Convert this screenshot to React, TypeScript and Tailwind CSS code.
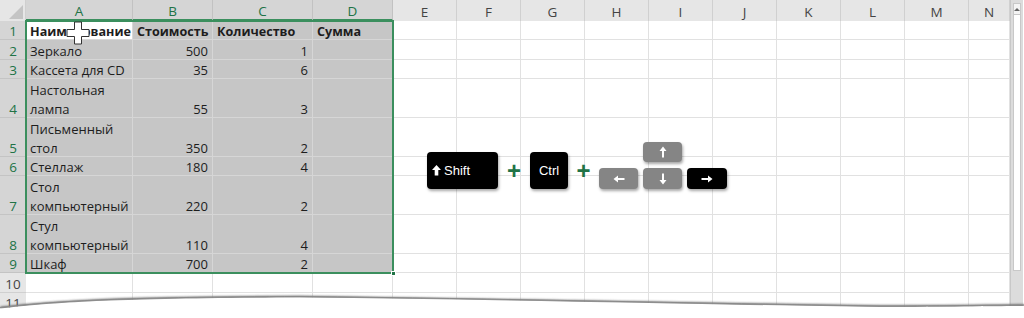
import React from "react"

const COLS = [
    { l: "A", w: 107, sel: true },
    { l: "B", w: 80, sel: true },
    { l: "C", w: 100, sel: true },
    { l: "D", w: 80, sel: true },
    { l: "E", w: 64 },
    { l: "F", w: 64 },
    { l: "G", w: 64 },
    { l: "H", w: 64 },
    { l: "I", w: 64 },
    { l: "J", w: 64 },
    { l: "K", w: 64 },
    { l: "L", w: 64 },
    { l: "M", w: 64 },
    { l: "N", w: 41 },
]

type Row = { n: number; tall?: boolean; a: string[]; b?: string; c?: string; d?: string; head?: boolean }

const ROWS: Row[] = [
    { n: 1, a: ["Наименование"], b: "Стоимость", c: "Количество", d: "Сумма", head: true },
    { n: 2, a: ["Зеркало"], b: "500", c: "1" },
    { n: 3, a: ["Кассета для CD"], b: "35", c: "6" },
    { n: 4, tall: true, a: ["Настольная", "лампа"], b: "55", c: "3" },
    { n: 5, tall: true, a: ["Письменный", "стол"], b: "350", c: "2" },
    { n: 6, a: ["Стеллаж"], b: "180", c: "4" },
    { n: 7, tall: true, a: ["Стол", "компьютерный"], b: "220", c: "2" },
    { n: 8, tall: true, a: ["Стул", "компьютерный"], b: "110", c: "4" },
    { n: 9, a: ["Шкаф"], b: "700", c: "2" },
    { n: 10, a: [] },
    { n: 11, a: [] },
]

function Cell({ w, sel, active, lines, right, bold }: { w: number; sel?: boolean; active?: boolean; lines: string[]; right?: boolean; bold?: boolean }) {
    const bg = active ? "bg-white border-[#d8d8d8]" : sel ? "bg-[#c6c6c6] border-[#d6d6d6]" : "bg-white border-[#e1e1e1]"
    return (
        <div
            className={`flex h-full shrink-0 flex-col justify-end overflow-visible whitespace-nowrap border-r border-b px-[4px] ${bg} ${right ? "items-end" : "items-start"} ${bold ? "font-bold text-[12.6px]" : ""}`}
            style={{ width: w }}
        >
            <div className={`-mb-[2px] flex flex-col ${right ? "items-end" : "items-start"}`}>
                {lines.map((t, i) => (
                    <span key={i} className="leading-[19px]">{t}</span>
                ))}
            </div>
        </div>
    )
}

function Key({ className, children }: { className: string; children?: React.ReactNode }) {
    return (
        <div className={`flex items-center rounded-[4px] text-white shadow-[1px_2px_3px_rgba(0,0,0,0.35)] ${className}`}>
            {children}
        </div>
    )
}

function Arrow({ dir }: { dir: "up" | "down" | "left" | "right" }) {
    const rot = { up: 0, right: 90, down: 180, left: 270 }[dir]
    return (
        <svg width="12" height="12" viewBox="0 0 12 12" style={{ transform: `rotate(${rot}deg)` }}>
            <polygon points="6,0.5 9.5,5 7,5 7,11.5 5,11.5 5,5 2.5,5" fill="white" />
        </svg>
    )
}

export default function App() {
    return (
        <div className="relative h-[318px] w-[1024px] overflow-hidden bg-white font-['Open_Sans','Noto_Sans',sans-serif] text-[13px] text-[#1d1d1d]">
            <div className="flex">
                {/* sheet */}
                <div className="flex w-[1010px] flex-col">
                    <div className="flex h-[21px] bg-[#e6e6e6] text-[13.5px]">
                        <div className="relative w-[26px] shrink-0 border-r border-[#cfcfcf]">
                            <div className="absolute right-[2px] bottom-[2px] h-0 w-0 border-l-[14px] border-l-transparent [border-bottom:14px_solid_#c4c4c4]" />
                        </div>
                        {COLS.map((c) => (
                            <div
                                key={c.l}
                                className={`flex shrink-0 items-center justify-center border-r pt-[3px] ${c.sel ? "border-b-2 border-r-[#c2c2c2] border-b-[#3b8f5e] bg-[#d5d5d5] text-[#217346]" : "border-r-[#d0d0d0] text-[#444]"}`}
                                style={{ width: c.w }}
                            >
                                {c.l}
                            </div>
                        ))}
                    </div>
                    {ROWS.map((r) => {
                        const sel = r.n <= 9
                        return (
                            <div key={r.n} className={`flex ${r.tall ? "h-[38.8px]" : "h-[19.4px]"}`}>
                                <div
                                    className={`flex w-[26px] shrink-0 items-end justify-center border-b text-[13.5px] ${sel ? "border-[#c4c4c4] bg-[#d5d5d5] text-[#217346]" : "border-[#d0d0d0] bg-[#e6e6e6] text-[#444]"}`}
                                >
                                    <span className="-mb-[2px] leading-[19px]">{r.n}</span>
                                </div>
                                <Cell w={107} sel={sel} active={r.n === 1} lines={r.a} bold={r.head} />
                                <Cell w={80} sel={sel} lines={r.b ? [r.b] : []} right={!r.head} bold={r.head} />
                                <Cell w={100} sel={sel} lines={r.c ? [r.c] : []} right={!r.head} bold={r.head} />
                                <Cell w={80} sel={sel} lines={r.d ? [r.d] : []} bold={r.head} />
                                {COLS.slice(4).map((c) => (
                                    <Cell key={c.l} w={c.w} lines={[]} />
                                ))}
                            </div>
                        )
                    })}
                </div>
                {/* scrollbar */}
                <div className="flex h-[318px] w-[13px] flex-col border-l border-[#c8c8c8] bg-[#dcdcdc] px-[2px] pt-[3px]">
                    <div className="flex h-[12px] items-center justify-center border border-[#c8c8c8] bg-[#f4f4f4]">
                        <div className="h-0 w-0 border-x-[3px] border-b-[3px] border-x-transparent border-b-[#666]" />
                    </div>
                    <div className="h-[256px] border-x border-b border-[#c8c8c8] bg-white" />
                </div>
            </div>

            {/* selection outline */}
            <div className="pointer-events-none absolute top-[20px] left-[25px] h-[254px] w-[369px] border-2 border-[#3b8f5e]" />
            <div className="absolute top-[271px] left-[391px] h-[5px] w-[5px] border border-white bg-[#217346]" />

            {/* cursor */}
            <svg className="absolute top-[21px] left-[66px]" width="24" height="24" viewBox="0 0 24 24">
                <polygon
                    points="8.5,1 15.5,1 15.5,8.5 23,8.5 23,15.5 15.5,15.5 15.5,23 8.5,23 8.5,15.5 1,15.5 1,8.5 8.5,8.5"
                    fill="white"
                    stroke="#333"
                    strokeWidth="1"
                />
            </svg>

            {/* keyboard shortcut */}
            <div className="absolute top-[142px] left-[427px] flex items-end font-['Liberation_Sans',Arial,sans-serif] text-[13px]">
                <Key className="h-[37px] w-[71px] bg-black pl-[5px]">
                    <svg width="9" height="11" viewBox="0 0 9 11" className="mr-[3px]">
                        <polygon points="4.5,0 9,5 6.3,5 6.3,10.5 2.7,10.5 2.7,5 0,5" fill="white" />
                    </svg>
                    Shift
                </Key>
                <div className="flex h-[37px] w-[32px] items-center justify-center text-[24px] leading-none font-bold text-[#217346]">+</div>
                <Key className="h-[37px] w-[38px] justify-center bg-black">Ctrl</Key>
                <div className="flex h-[37px] w-[31px] items-center justify-center text-[24px] leading-none font-bold text-[#217346]">+</div>
                <div className="flex flex-col items-center gap-[6px]">
                    <div className="flex w-full justify-center">
                        <Key className="ml-[-1px] h-[20px] w-[39px] justify-center bg-[#858585]">
                            <Arrow dir="up" />
                        </Key>
                    </div>
                    <div className="flex gap-[5px]">
                        <Key className="h-[21px] w-[39px] justify-center bg-[#858585]">
                            <Arrow dir="left" />
                        </Key>
                        <Key className="h-[21px] w-[39px] justify-center bg-[#858585]">
                            <Arrow dir="down" />
                        </Key>
                        <Key className="h-[21px] w-[40px] justify-center bg-black">
                            <Arrow dir="right" />
                        </Key>
                    </div>
                </div>
            </div>

            {/* torn page edge */}
            <svg className="absolute bottom-0 left-0" width="1024" height="30" viewBox="0 0 1024 30">
                <defs>
                    <filter id="sh" x="-5%" y="-100%" width="110%" height="300%">
                        <feGaussianBlur stdDeviation="1.2" />
                    </filter>
                </defs>
                <path
                    d="M0,20 C60,13 130,9.5 300,9 C500,11 700,16 880,18.5 C950,18.5 1000,17.5 1024,17.5"
                    fill="none"
                    stroke="#6a6a6a"
                    strokeWidth="2.5"
                    filter="url(#sh)"
                />
                <path
                    d="M0,20.5 C60,13.5 130,10 300,9.5 C500,11.5 700,16.5 880,19 C950,19 1000,18 1024,18 L1024,30 L0,30 Z"
                    fill="white"
                />
                <path
                    d="M0,19.5 C60,12.5 130,9 300,8.5 C500,10.5 700,15.5 880,18 C950,18 1000,17 1024,17"
                    fill="none"
                    stroke="#8a8a8a"
                    strokeWidth="1"
                />
            </svg>
        </div>
    )
}
